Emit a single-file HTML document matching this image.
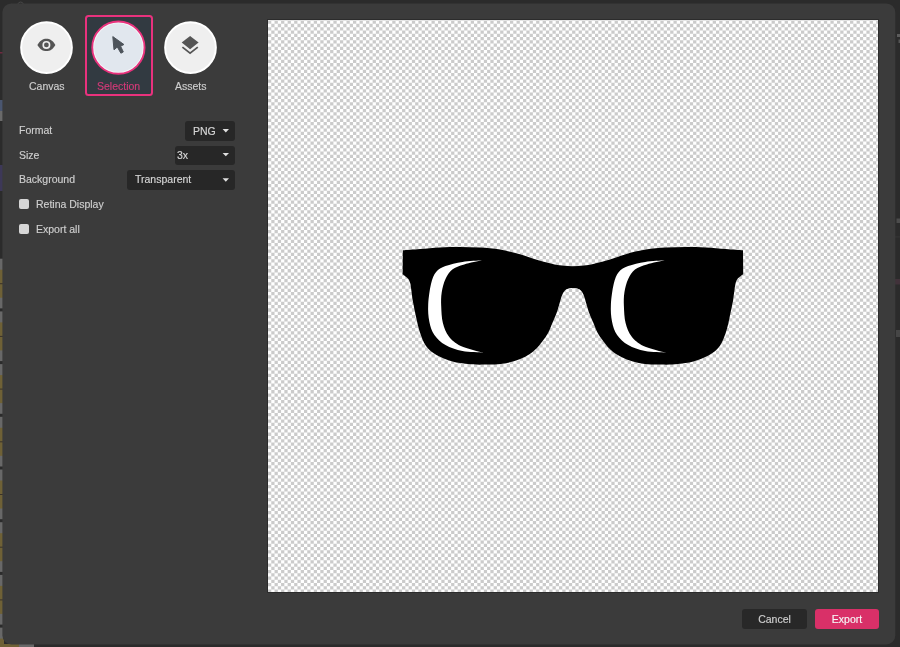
<!DOCTYPE html>
<html><head><meta charset="utf-8">
<style>
html,body{margin:0;padding:0;}
body{width:900px;height:647px;overflow:hidden;background:#2b2b2b;position:relative;font-family:"Liberation Sans",sans-serif;font-size:10.5px;-webkit-text-stroke:0.15px currentColor;}
.abs{position:absolute;}
#dlg{position:absolute;left:2px;top:3px;width:894px;height:641px;border-radius:8px;background:#3b3b3b;}
.circ{position:absolute;width:49px;height:49px;border-radius:50%;background:#efefef;border:2px solid #fff;}
.lbl{position:absolute;will-change:transform;color:#cfcfcf;white-space:nowrap;line-height:12px;}
.sel{position:absolute;left:85px;top:15px;width:64px;height:77px;border:2px solid #e9327d;border-radius:3.5px;background:#323a41;}
.dd{position:absolute;background:#272727;border-radius:3px;height:19px;}
.dd .t{position:absolute;will-change:transform;top:0;line-height:19px;color:#d6d6d6;}
.arrow{position:absolute;width:0;height:0;border-left:3.2px solid transparent;border-right:3.2px solid transparent;border-top:3.3px solid #dcdcdc;}
.cb{position:absolute;left:19px;width:10px;height:10px;border-radius:2px;background:#d6d6d6;}
#preview{position:absolute;left:268px;top:20px;width:610px;height:572px;
  background-color:#fff;
  box-shadow:0 0 0 1px rgba(0,0,0,0.25);}
.btn{position:absolute;will-change:transform;top:609px;height:20px;border-radius:3px;line-height:20px;text-align:center;}
</style></head><body>
<svg class="abs" style="left:0;top:0" width="900" height="647" viewBox="0 0 900 647">
<rect x="0" y="100" width="4" height="13" fill="#4a5670"/><rect x="0" y="111" width="4" height="10" fill="#6a6a6a"/><rect x="0" y="165" width="4" height="26" fill="#3d3858"/>
<rect x="0" y="52" width="4" height="1.5" fill="#6e2a40"/><rect x="0" y="644" width="19" height="3" fill="#6f6136"/><rect x="19" y="644" width="15" height="3" fill="#686868"/><rect x="897" y="34" width="3" height="3" fill="#5c5c5c"/><rect x="898.5" y="39.5" width="1.5" height="3.5" fill="#555"/><rect x="896.5" y="218.5" width="3.5" height="4.5" fill="#4c4c4c"/><rect x="895" y="236.5" width="5" height="0.8" fill="#383838"/><rect x="895" y="279" width="5" height="5.5" fill="#41323a"/><rect x="896" y="330" width="4" height="7" fill="#464646"/>
<rect x="0" y="258.7" width="4" height="49.7" fill="#686868"/>
<rect x="0" y="269.7" width="4" height="28.0" fill="#6f6136"/>
<rect x="0" y="283.2" width="4" height="1" fill="#3a3228"/>
<rect x="0" y="311.4" width="4" height="49.7" fill="#686868"/>
<rect x="0" y="322.4" width="4" height="28.0" fill="#6f6136"/>
<rect x="0" y="335.9" width="4" height="1" fill="#3a3228"/>
<rect x="0" y="364.1" width="4" height="49.7" fill="#686868"/>
<rect x="0" y="375.1" width="4" height="28.0" fill="#6f6136"/>
<rect x="0" y="388.6" width="4" height="1" fill="#3a3228"/>
<rect x="0" y="416.8" width="4" height="49.7" fill="#686868"/>
<rect x="0" y="427.8" width="4" height="28.0" fill="#6f6136"/>
<rect x="0" y="441.3" width="4" height="1" fill="#3a3228"/>
<rect x="0" y="469.5" width="4" height="49.7" fill="#686868"/>
<rect x="0" y="480.5" width="4" height="28.0" fill="#6f6136"/>
<rect x="0" y="494.0" width="4" height="1" fill="#3a3228"/>
<rect x="0" y="522.2" width="4" height="49.7" fill="#686868"/>
<rect x="0" y="533.2" width="4" height="28.0" fill="#6f6136"/>
<rect x="0" y="546.7" width="4" height="1" fill="#3a3228"/>
<rect x="0" y="574.9" width="4" height="49.7" fill="#686868"/>
<rect x="0" y="585.9" width="4" height="28.0" fill="#6f6136"/>
<rect x="0" y="599.4" width="4" height="1" fill="#3a3228"/>
<rect x="0" y="627.6" width="4" height="49.7" fill="#686868"/>
<rect x="0" y="638.6" width="4" height="28.0" fill="#6f6136"/>
<rect x="0" y="652.1" width="4" height="1" fill="#3a3228"/>
</svg>
<svg class="abs" style="left:0;top:0" width="900" height="647" viewBox="0 0 900 647"><path d="M17.8 4.2 A2.9 2.9 0 0 1 23.4 4.2" fill="none" stroke="#4a4a4a" stroke-width="0.9"/><rect x="2.4" y="3.4" width="892.9" height="641.1" rx="9" fill="#3b3b3b"/></svg>

<!-- top buttons -->
<div class="sel"></div>

<svg class="abs" style="left:0;top:0" width="900" height="647" viewBox="0 0 900 647">
  <circle cx="46.5" cy="47.55" r="25.35" fill="#efefef" stroke="#fff" stroke-width="2"/>
  <circle cx="190.5" cy="47.55" r="25.35" fill="#efefef" stroke="#fff" stroke-width="2"/>
  <circle cx="118.4" cy="47.6" r="26.15" fill="#f3f6f9" stroke="#e9327d" stroke-width="1.9"/>
  <circle cx="118.4" cy="47.6" r="24.3" fill="#e1e7ee"/>
  <!-- eye -->
  <path fill="#555" d="M37.4 44.9 C40 40.4 43 38.7 46.4 38.7 C49.8 38.7 52.8 40.4 55.4 44.9 C52.8 49.4 49.8 51.1 46.4 51.1 C43 51.1 40 49.4 37.4 44.9 Z"/>
  <circle cx="46.4" cy="44.9" r="4.0" fill="#efefef"/>
  <circle cx="46.4" cy="44.9" r="2.4" fill="#555"/>
  <!-- cursor -->
  <path fill="#4d545b" stroke="#4d545b" stroke-width="1" stroke-linejoin="round" d="M112.8 36.6 L114 49.8 L117.3 47 L120.9 53.2 L123.3 51.9 L120.6 46.2 L123.9 44.5 Z"/>
  <!-- layers -->
  <path fill="#555" d="M190.1 36.1 L198.6 42.6 L190.1 49.2 L181.7 42.6 Z"/>
  <path fill="none" stroke="#555" stroke-width="1.8" d="M182.4 47.1 L190.1 53.1 L197.8 47.1"/>
</svg>

<div class="lbl" style="left:29px;top:80px;">Canvas</div>
<div class="lbl" style="left:96.5px;top:80px;color:#d33a78;">Selection</div>
<div class="lbl" style="left:175px;top:80px;">Assets</div>

<!-- form -->
<div class="lbl" style="left:19px;top:124px;">Format</div>
<div class="lbl" style="left:19px;top:149px;">Size</div>
<div class="lbl" style="left:19px;top:173px;">Background</div>

<div class="dd" style="left:185px;top:121px;width:50px;height:20px;"><span class="t" style="left:8px;top:0.5px;">PNG</span></div>
<div class="dd" style="left:175px;top:146px;width:60px;"><span class="t" style="left:2px;">3x</span></div>
<div class="dd" style="left:127px;top:170px;width:108px;height:20px;"><span class="t" style="left:8px;">Transparent</span></div>
<svg class="abs" style="left:0;top:0" width="900" height="647" viewBox="0 0 900 647"><path fill="#e0e0e0" d="M222.6 129H229L225.8 132.4Z M222.6 153H229L225.8 156.3Z M222.6 178.3H229L225.8 181.7Z"/></svg>

<div class="cb" style="top:199px;"></div>
<div class="lbl" style="left:36px;top:198px;">Retina Display</div>
<div class="cb" style="top:224px;"></div>
<div class="lbl" style="left:36px;top:223px;">Export all</div>

<!-- preview -->
<div id="preview"></div>
<svg class="abs" style="left:0;top:0" width="900" height="647" viewBox="0 0 900 647">
  <path fill="#cbcbcb" fill-rule="evenodd" d="M268.00 20h3.27v572h-3.27zM274.54 20h3.27v572h-3.27zM281.08 20h3.27v572h-3.27zM287.62 20h3.27v572h-3.27zM294.16 20h3.27v572h-3.27zM300.70 20h3.27v572h-3.27zM307.24 20h3.27v572h-3.27zM313.78 20h3.27v572h-3.27zM320.32 20h3.27v572h-3.27zM326.86 20h3.27v572h-3.27zM333.40 20h3.27v572h-3.27zM339.94 20h3.27v572h-3.27zM346.48 20h3.27v572h-3.27zM353.02 20h3.27v572h-3.27zM359.56 20h3.27v572h-3.27zM366.10 20h3.27v572h-3.27zM372.64 20h3.27v572h-3.27zM379.18 20h3.27v572h-3.27zM385.72 20h3.27v572h-3.27zM392.26 20h3.27v572h-3.27zM398.80 20h3.27v572h-3.27zM405.34 20h3.27v572h-3.27zM411.88 20h3.27v572h-3.27zM418.42 20h3.27v572h-3.27zM424.96 20h3.27v572h-3.27zM431.50 20h3.27v572h-3.27zM438.04 20h3.27v572h-3.27zM444.58 20h3.27v572h-3.27zM451.12 20h3.27v572h-3.27zM457.66 20h3.27v572h-3.27zM464.20 20h3.27v572h-3.27zM470.74 20h3.27v572h-3.27zM477.28 20h3.27v572h-3.27zM483.82 20h3.27v572h-3.27zM490.36 20h3.27v572h-3.27zM496.90 20h3.27v572h-3.27zM503.44 20h3.27v572h-3.27zM509.98 20h3.27v572h-3.27zM516.52 20h3.27v572h-3.27zM523.06 20h3.27v572h-3.27zM529.60 20h3.27v572h-3.27zM536.14 20h3.27v572h-3.27zM542.68 20h3.27v572h-3.27zM549.22 20h3.27v572h-3.27zM555.76 20h3.27v572h-3.27zM562.30 20h3.27v572h-3.27zM568.84 20h3.27v572h-3.27zM575.38 20h3.27v572h-3.27zM581.92 20h3.27v572h-3.27zM588.46 20h3.27v572h-3.27zM595.00 20h3.27v572h-3.27zM601.54 20h3.27v572h-3.27zM608.08 20h3.27v572h-3.27zM614.62 20h3.27v572h-3.27zM621.16 20h3.27v572h-3.27zM627.70 20h3.27v572h-3.27zM634.24 20h3.27v572h-3.27zM640.78 20h3.27v572h-3.27zM647.32 20h3.27v572h-3.27zM653.86 20h3.27v572h-3.27zM660.40 20h3.27v572h-3.27zM666.94 20h3.27v572h-3.27zM673.48 20h3.27v572h-3.27zM680.02 20h3.27v572h-3.27zM686.56 20h3.27v572h-3.27zM693.10 20h3.27v572h-3.27zM699.64 20h3.27v572h-3.27zM706.18 20h3.27v572h-3.27zM712.72 20h3.27v572h-3.27zM719.26 20h3.27v572h-3.27zM725.80 20h3.27v572h-3.27zM732.34 20h3.27v572h-3.27zM738.88 20h3.27v572h-3.27zM745.42 20h3.27v572h-3.27zM751.96 20h3.27v572h-3.27zM758.50 20h3.27v572h-3.27zM765.04 20h3.27v572h-3.27zM771.58 20h3.27v572h-3.27zM778.12 20h3.27v572h-3.27zM784.66 20h3.27v572h-3.27zM791.20 20h3.27v572h-3.27zM797.74 20h3.27v572h-3.27zM804.28 20h3.27v572h-3.27zM810.82 20h3.27v572h-3.27zM817.36 20h3.27v572h-3.27zM823.90 20h3.27v572h-3.27zM830.44 20h3.27v572h-3.27zM836.98 20h3.27v572h-3.27zM843.52 20h3.27v572h-3.27zM850.06 20h3.27v572h-3.27zM856.60 20h3.27v572h-3.27zM863.14 20h3.27v572h-3.27zM869.68 20h3.27v572h-3.27zM876.22 20h1.78v572h-1.78zM268 20.00h610v0.60h-610zM268 23.87h610v3.27h-610zM268 30.41h610v3.27h-610zM268 36.95h610v3.27h-610zM268 43.49h610v3.27h-610zM268 50.03h610v3.27h-610zM268 56.57h610v3.27h-610zM268 63.11h610v3.27h-610zM268 69.65h610v3.27h-610zM268 76.19h610v3.27h-610zM268 82.73h610v3.27h-610zM268 89.27h610v3.27h-610zM268 95.81h610v3.27h-610zM268 102.35h610v3.27h-610zM268 108.89h610v3.27h-610zM268 115.43h610v3.27h-610zM268 121.97h610v3.27h-610zM268 128.51h610v3.27h-610zM268 135.05h610v3.27h-610zM268 141.59h610v3.27h-610zM268 148.13h610v3.27h-610zM268 154.67h610v3.27h-610zM268 161.21h610v3.27h-610zM268 167.75h610v3.27h-610zM268 174.29h610v3.27h-610zM268 180.83h610v3.27h-610zM268 187.37h610v3.27h-610zM268 193.91h610v3.27h-610zM268 200.45h610v3.27h-610zM268 206.99h610v3.27h-610zM268 213.53h610v3.27h-610zM268 220.07h610v3.27h-610zM268 226.61h610v3.27h-610zM268 233.15h610v3.27h-610zM268 239.69h610v3.27h-610zM268 246.23h610v3.27h-610zM268 252.77h610v3.27h-610zM268 259.31h610v3.27h-610zM268 265.85h610v3.27h-610zM268 272.39h610v3.27h-610zM268 278.93h610v3.27h-610zM268 285.47h610v3.27h-610zM268 292.01h610v3.27h-610zM268 298.55h610v3.27h-610zM268 305.09h610v3.27h-610zM268 311.63h610v3.27h-610zM268 318.17h610v3.27h-610zM268 324.71h610v3.27h-610zM268 331.25h610v3.27h-610zM268 337.79h610v3.27h-610zM268 344.33h610v3.27h-610zM268 350.87h610v3.27h-610zM268 357.41h610v3.27h-610zM268 363.95h610v3.27h-610zM268 370.49h610v3.27h-610zM268 377.03h610v3.27h-610zM268 383.57h610v3.27h-610zM268 390.11h610v3.27h-610zM268 396.65h610v3.27h-610zM268 403.19h610v3.27h-610zM268 409.73h610v3.27h-610zM268 416.27h610v3.27h-610zM268 422.81h610v3.27h-610zM268 429.35h610v3.27h-610zM268 435.89h610v3.27h-610zM268 442.43h610v3.27h-610zM268 448.97h610v3.27h-610zM268 455.51h610v3.27h-610zM268 462.05h610v3.27h-610zM268 468.59h610v3.27h-610zM268 475.13h610v3.27h-610zM268 481.67h610v3.27h-610zM268 488.21h610v3.27h-610zM268 494.75h610v3.27h-610zM268 501.29h610v3.27h-610zM268 507.83h610v3.27h-610zM268 514.37h610v3.27h-610zM268 520.91h610v3.27h-610zM268 527.45h610v3.27h-610zM268 533.99h610v3.27h-610zM268 540.53h610v3.27h-610zM268 547.07h610v3.27h-610zM268 553.61h610v3.27h-610zM268 560.15h610v3.27h-610zM268 566.69h610v3.27h-610zM268 573.23h610v3.27h-610zM268 579.77h610v3.27h-610zM268 586.31h610v3.27h-610z"/>
  <path fill="#000" d="M402.8 250.3 C405.7 250.1 413.8 249.5 420.0 249.0 C426.2 248.5 433.3 247.7 440.0 247.4 C446.7 247.1 453.3 247.0 460.0 247.0 C466.7 247.0 473.3 247.2 480.0 247.6 C486.7 248.0 493.3 248.5 500.0 249.6 C506.7 250.7 514.2 252.6 520.0 254.2 C525.8 255.8 529.7 257.6 535.0 259.2 C540.3 260.8 547.2 262.6 551.7 263.7 C556.2 264.8 558.5 265.1 562.0 265.5 C565.5 265.9 569.3 266.2 572.9 266.2 C576.5 266.2 580.3 265.9 583.8 265.5 C587.3 265.1 589.6 264.8 594.1 263.7 C598.6 262.6 605.5 260.8 610.8 259.2 C616.1 257.6 620.0 255.8 625.8 254.2 C631.6 252.6 639.1 250.7 645.8 249.6 C652.5 248.5 659.1 248.0 665.8 247.6 C672.5 247.2 679.1 247.0 685.8 247.0 C692.5 247.0 699.1 247.1 705.8 247.4 C712.5 247.7 719.6 248.5 725.8 249.0 C732.0 249.5 740.1 250.1 743.0 250.3 L743.2 274.3 C742.8 274.6 741.6 275.4 740.6 276.2 C739.6 277.0 738.2 277.8 737.4 279.0 C736.5 280.2 736.0 281.9 735.5 283.6 C735.0 285.3 735.0 286.5 734.6 289.2 C734.2 291.9 733.4 298.2 733.2 300.0 C732.6 303.0 730.7 312.7 729.5 318.0 C728.3 323.3 727.6 327.3 726.0 332.0 C724.4 336.7 722.6 342.1 719.8 346.0 C716.9 349.9 713.3 352.7 708.9 355.3 C704.5 357.9 698.4 360.1 693.3 361.5 C688.1 362.9 683.2 363.5 678.0 364.0 C672.8 364.5 668.7 364.8 662.2 364.6 C655.7 364.5 646.7 364.9 638.9 363.1 C631.1 361.3 622.1 358.2 615.6 353.8 C609.1 349.4 603.8 342.0 600.0 336.7 C596.2 331.4 594.9 326.4 593.0 322.1 C591.1 317.8 589.8 314.7 588.5 311.0 C587.2 307.3 586.2 302.8 585.3 300.0 C584.4 297.2 584.0 295.7 583.2 294.0 C582.4 292.3 581.4 290.9 580.3 290.0 C579.2 289.1 577.7 288.7 576.5 288.3 C575.3 287.9 574.1 287.9 572.9 287.9 C571.7 287.9 570.5 287.9 569.3 288.3 C568.1 288.7 566.6 289.1 565.5 290.0 C564.4 290.9 563.4 292.3 562.6 294.0 C561.8 295.7 561.4 297.2 560.5 300.0 C559.6 302.8 558.6 307.3 557.3 311.0 C556.0 314.7 554.7 317.8 552.8 322.1 C550.9 326.4 549.6 331.4 545.8 336.7 C542.0 342.0 536.7 349.4 530.2 353.8 C523.7 358.2 514.7 361.3 506.9 363.1 C499.1 364.9 490.1 364.5 483.6 364.6 C477.1 364.8 473.0 364.5 467.8 364.0 C462.6 363.5 457.6 362.9 452.5 361.5 C447.4 360.1 441.3 357.9 436.9 355.3 C432.5 352.7 428.9 349.9 426.0 346.0 C423.1 342.1 421.4 336.7 419.8 332.0 C418.2 327.3 417.5 323.3 416.3 318.0 C415.1 312.7 413.2 303.0 412.6 300.0 C412.4 298.2 411.6 291.9 411.2 289.2 C410.8 286.5 410.8 285.3 410.3 283.6 C409.8 281.9 409.2 280.2 408.4 279.0 C407.5 277.8 406.2 277.0 405.2 276.2 C404.2 275.4 403.0 274.6 402.6 274.3 Z"/>
  <path fill="#fff" d="M482.0 260.2 C478.8 260.5 468.6 260.9 462.5 261.9 C456.4 262.9 449.9 264.4 445.5 266.1 C441.1 267.8 438.5 269.1 436.1 272.1 C433.7 275.1 432.3 278.6 431.0 284.0 C429.7 289.4 428.5 298.2 428.2 304.4 C427.9 310.6 428.3 316.3 429.3 321.4 C430.3 326.5 431.7 331.1 434.4 335.0 C437.1 338.9 440.8 342.4 445.5 345.1 C450.2 347.8 456.1 349.8 462.5 351.1 C468.9 352.4 480.2 352.5 483.7 352.8 C479.9 351.7 466.6 348.7 460.8 346.0 C455.0 343.3 451.9 340.4 448.9 336.6 C445.9 332.8 444.2 328.2 442.9 323.1 C441.6 318.0 441.4 311.2 441.2 306.1 C441.0 301.0 441.0 297.0 441.7 292.5 C442.4 288.0 443.7 282.7 445.5 278.9 C447.3 275.1 449.2 271.9 452.3 269.5 C455.4 267.1 459.2 265.9 464.2 264.4 C469.1 262.8 479.0 260.9 482.0 260.2 Z"/>
  <path fill="#fff" transform="translate(182.7 0)" d="M482.0 260.2 C478.8 260.5 468.6 260.9 462.5 261.9 C456.4 262.9 449.9 264.4 445.5 266.1 C441.1 267.8 438.5 269.1 436.1 272.1 C433.7 275.1 432.3 278.6 431.0 284.0 C429.7 289.4 428.5 298.2 428.2 304.4 C427.9 310.6 428.3 316.3 429.3 321.4 C430.3 326.5 431.7 331.1 434.4 335.0 C437.1 338.9 440.8 342.4 445.5 345.1 C450.2 347.8 456.1 349.8 462.5 351.1 C468.9 352.4 480.2 352.5 483.7 352.8 C479.9 351.7 466.6 348.7 460.8 346.0 C455.0 343.3 451.9 340.4 448.9 336.6 C445.9 332.8 444.2 328.2 442.9 323.1 C441.6 318.0 441.4 311.2 441.2 306.1 C441.0 301.0 441.0 297.0 441.7 292.5 C442.4 288.0 443.7 282.7 445.5 278.9 C447.3 275.1 449.2 271.9 452.3 269.5 C455.4 267.1 459.2 265.9 464.2 264.4 C469.1 262.8 479.0 260.9 482.0 260.2 Z"/>
</svg>

<!-- buttons -->
<div class="btn" style="left:742px;width:65px;background:#282828;color:#d0d0d0;">Cancel</div>
<div class="btn" style="left:815px;width:64px;background:#d93068;color:#f6f6f6;">Export</div>
</body></html>
